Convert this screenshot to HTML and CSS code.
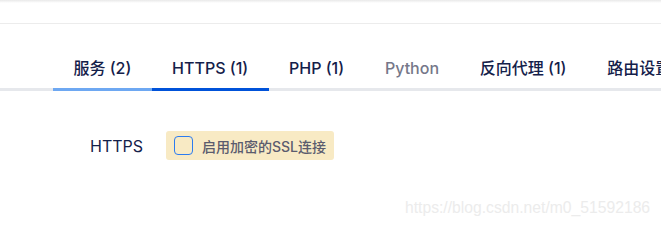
FILE: index.html
```html
<!DOCTYPE html>
<html lang="zh-CN">
<head>
    <meta charset="UTF-8">
    <meta name="viewport" content="width=device-width, initial-scale=1.0">
    <title>站点设置</title>
    <link rel="stylesheet" href="styles.css">
</head>
<body>

    <div class="topbar"></div>

    <nav class="tabs">
        <div class="tab done">服务 (2)</div>
        <div class="tab active">HTTPS (1)</div>
        <div class="tab">PHP (1)</div>
        <div class="tab disabled">Python</div>
        <div class="tab">反向代理 (1)</div>
        <div class="tab">路由设置</div>
    </nav>

    <div class="form-row">
        <span class="form-label">HTTPS</span>
        <label class="check-group">
            <span class="check-box"></span>
            <span class="check-text">启用加密的SSL连接</span>
        </label>
    </div>

    <div class="watermark">https://blog.csdn.net/m0_51592186</div>

</body>
</html>
```

FILE: styles.css
```css
/* 全局 */
body {
    margin: 0;
    font-family: Inter, "Noto Sans CJK SC", sans-serif;
    color: #14204a;
    background: #fff;
    overflow: hidden;
    position: relative;
    height: 229px;
}

/* 顶部条 */
.topbar {
    height: 23px;
    border-bottom: 1px solid #ececec;
    background: linear-gradient(#e9e9e9, #fff 3px);
}

/* 选项卡 */
.tabs {
    display: flex;
    margin-top: 34px;
    padding-left: 53px;
    border-bottom: 3px solid #e6e8ec;
    white-space: nowrap;
}
.tab {
    padding: 0 20.4px 10px;
    line-height: 20px;
    font-size: 16px;
    font-weight: 500;
    margin-bottom: -3px;
    border-bottom: 3px solid transparent;
}
.tab.done { border-bottom-color: #6ea8f2; }
.tab.active { border-bottom-color: #0052d9; }
.tab.disabled { color: #757789; }

/* 表单行 */
.form-row {
    display: flex;
    align-items: center;
    gap: 23px;
    margin-top: 40px;
    padding-left: 90px;
}
.form-label {
    font-size: 16px;
}
.check-group {
    display: flex;
    align-items: center;
    gap: 9px;
    height: 29px;
    padding: 0 8px 0 8px;
    background: #f8eac4;
    border-radius: 3px;
}
.check-box {
    width: 17px;
    height: 17px;
    border: 1.5px solid #2c7cf0;
    border-radius: 4px;
}
.check-text {
    font-size: 14px;
    font-weight: 500;
    color: #5b5c6e;
}

/* 水印 */
.watermark {
    position: absolute;
    left: 405px;
    top: 199px;
    font-family: "Liberation Sans", Arial, sans-serif;
    font-size: 15.7px;
    color: #ececec;
}
```
